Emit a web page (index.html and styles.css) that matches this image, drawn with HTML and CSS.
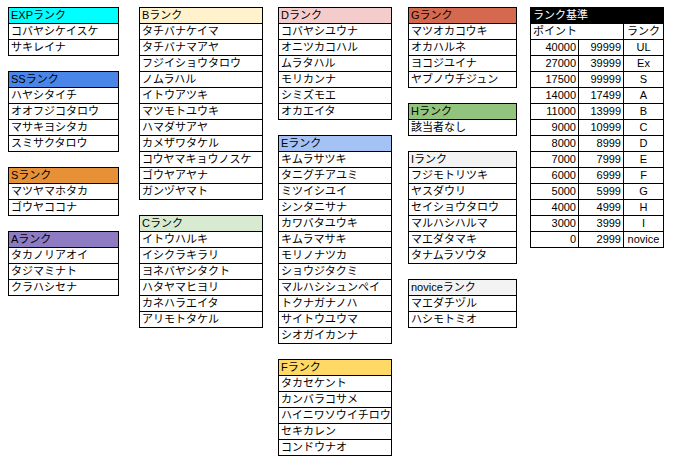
FILE: index.html
```html
<!DOCTYPE html>
<html lang="ja">
<head>
<meta charset="utf-8">
<link rel="stylesheet" href="styles.css">
</head>
<body>
<div class="sheet">
  <div class="col col-a">
    <div class="tbl">
      <div class="row hd exp">EXPランク</div>
      <div class="row">コバヤシケイスケ</div>
      <div class="row">サキレイナ</div>
    </div>
    <div class="tbl">
      <div class="row hd ss">SSランク</div>
      <div class="row">ハヤシタイチ</div>
      <div class="row">オオフジコタロウ</div>
      <div class="row">マサキヨシタカ</div>
      <div class="row">スミサクタロウ</div>
    </div>
    <div class="tbl">
      <div class="row hd s">Sランク</div>
      <div class="row">マツヤマホタカ</div>
      <div class="row">ゴウヤココナ</div>
    </div>
    <div class="tbl">
      <div class="row hd a">Aランク</div>
      <div class="row">タカノリアオイ</div>
      <div class="row">タジマミナト</div>
      <div class="row">クラハシセナ</div>
    </div>
  </div>

  <div class="col col-b">
    <div class="tbl">
      <div class="row hd b">Bランク</div>
      <div class="row">タチバナケイマ</div>
      <div class="row">タチバナマアヤ</div>
      <div class="row">フジイショウタロウ</div>
      <div class="row">ノムラハル</div>
      <div class="row">イトウアツキ</div>
      <div class="row">マツモトユウキ</div>
      <div class="row">ハマダサアヤ</div>
      <div class="row">カメザワタケル</div>
      <div class="row">コウヤマキョウノスケ</div>
      <div class="row">ゴウヤアヤナ</div>
      <div class="row">ガンヅヤマト</div>
    </div>
    <div class="tbl">
      <div class="row hd c">Cランク</div>
      <div class="row">イトウハルキ</div>
      <div class="row">イシクラキラリ</div>
      <div class="row">ヨネバヤシタクト</div>
      <div class="row">ハタヤマヒヨリ</div>
      <div class="row">カネハラエイタ</div>
      <div class="row">アリモトタケル</div>
    </div>
  </div>

  <div class="col col-d">
    <div class="tbl">
      <div class="row hd d">Dランク</div>
      <div class="row">コバヤシユウナ</div>
      <div class="row">オニツカコハル</div>
      <div class="row">ムラタハル</div>
      <div class="row">モリカンナ</div>
      <div class="row">シミズモエ</div>
      <div class="row">オカエイタ</div>
    </div>
    <div class="tbl">
      <div class="row hd e">Eランク</div>
      <div class="row">キムラサツキ</div>
      <div class="row">タニグチアユミ</div>
      <div class="row">ミツイシユイ</div>
      <div class="row">シンタニサナ</div>
      <div class="row">カワバタユウキ</div>
      <div class="row">キムラマサキ</div>
      <div class="row">モリノナツカ</div>
      <div class="row">ショウジタクミ</div>
      <div class="row">マルハシシュンペイ</div>
      <div class="row">トクナガナノハ</div>
      <div class="row">サイトウユウマ</div>
      <div class="row">シオガイカンナ</div>
    </div>
    <div class="tbl">
      <div class="row hd f">Fランク</div>
      <div class="row">タカセケント</div>
      <div class="row">カンバラコサメ</div>
      <div class="row">ハイニワソウイチロウ</div>
      <div class="row">セキカレン</div>
      <div class="row">コンドウナオ</div>
    </div>
  </div>

  <div class="col col-g">
    <div class="tbl">
      <div class="row hd g">Gランク</div>
      <div class="row">マツオカコウキ</div>
      <div class="row">オカハルネ</div>
      <div class="row">ヨコジユイナ</div>
      <div class="row">ヤブノウチジュン</div>
    </div>
    <div class="tbl">
      <div class="row hd h">Hランク</div>
      <div class="row">該当者なし</div>
    </div>
    <div class="tbl">
      <div class="row hd i">Iランク</div>
      <div class="row">フジモトリツキ</div>
      <div class="row">ヤスダウリ</div>
      <div class="row">セイショウタロウ</div>
      <div class="row">マルハシハルマ</div>
      <div class="row">マエダタマキ</div>
      <div class="row">タナムラソウタ</div>
    </div>
    <div class="tbl">
      <div class="row hd nv">noviceランク</div>
      <div class="row">マエダチヅル</div>
      <div class="row">ハシモトミオ</div>
    </div>
  </div>

  <div class="col col-r">
    <div class="rank">
      <div class="rc title">ランク基準</div>
      <div class="rc pt">ポイント</div>
      <div class="rc rk">ランク</div>
      <div class="rc num">40000</div><div class="rc num">99999</div><div class="rc ctr">UL</div>
      <div class="rc num">27000</div><div class="rc num">39999</div><div class="rc ctr">Ex</div>
      <div class="rc num">17500</div><div class="rc num">99999</div><div class="rc ctr">S</div>
      <div class="rc num">14000</div><div class="rc num">17499</div><div class="rc ctr">A</div>
      <div class="rc num">11000</div><div class="rc num">13999</div><div class="rc ctr">B</div>
      <div class="rc num">9000</div><div class="rc num">10999</div><div class="rc ctr">C</div>
      <div class="rc num">8000</div><div class="rc num">8999</div><div class="rc ctr">D</div>
      <div class="rc num">7000</div><div class="rc num">7999</div><div class="rc ctr">E</div>
      <div class="rc num">6000</div><div class="rc num">6999</div><div class="rc ctr">F</div>
      <div class="rc num">5000</div><div class="rc num">5999</div><div class="rc ctr">G</div>
      <div class="rc num">4000</div><div class="rc num">4999</div><div class="rc ctr">H</div>
      <div class="rc num">3000</div><div class="rc num">3999</div><div class="rc ctr">I</div>
      <div class="rc num">0</div><div class="rc num">2999</div><div class="rc ctr">novice</div>
    </div>
  </div>
</div>
</body>
</html>
```

FILE: styles.css
```css
html, body {
  margin: 0;
  padding: 0;
  background: #ffffff;
}

body {
  font-family: "Liberation Sans", "Noto Sans CJK JP", sans-serif;
  font-size: 11px;
  color: #000000;
}

.sheet {
  display: flex;
  align-items: flex-start;
  padding: 7px 0 0 8px;
}

.col {
  display: flex;
  flex-direction: column;
  gap: 15px;
}

.col-a { width: 111px; margin-right: 20px; }
.col-b { width: 124px; margin-right: 15px; }
.col-d { width: 114px; margin-right: 16px; }
.col-g { width: 109px; margin-right: 13px; }
.col-r { width: 134px; }

.tbl {
  border: 1px solid #000000;
}

.row {
  height: 15px;
  line-height: 15px;
  padding-left: 2px;
  white-space: nowrap;
  overflow: hidden;
  border-top: 1px solid #000000;
}

.row:first-child {
  border-top: none;
}

.exp { background: #00ffff; }
.ss { background: #4a86e8; }
.s { background: #e69138; }
.a { background: #8e7cc3; }
.b { background: #fff2cc; }
.c { background: #d9ead3; }
.d { background: #f4cccc; }
.e { background: #a4c2f4; }
.f { background: #ffd966; }
.g { background: #d5694f; }
.h { background: #93c47d; }
.i { background: #f3f3f3; }
.nv { background: #f3f3f3; }

.rank {
  display: grid;
  grid-template-columns: 48px 45px 40px;
  border-top: 1px solid #000000;
  border-left: 1px solid #000000;
}

.rc {
  height: 15px;
  line-height: 15px;
  border-right: 1px solid #000000;
  border-bottom: 1px solid #000000;
  white-space: nowrap;
  padding: 0 2px;
}

.title {
  grid-column: 1 / 4;
  background: #000000;
  color: #ffffff;
  border-right-color: #000000;
}

.pt {
  grid-column: 1 / 3;
}

.rk {
  text-align: center;
}

.num {
  text-align: right;
}

.ctr {
  text-align: center;
}
```
